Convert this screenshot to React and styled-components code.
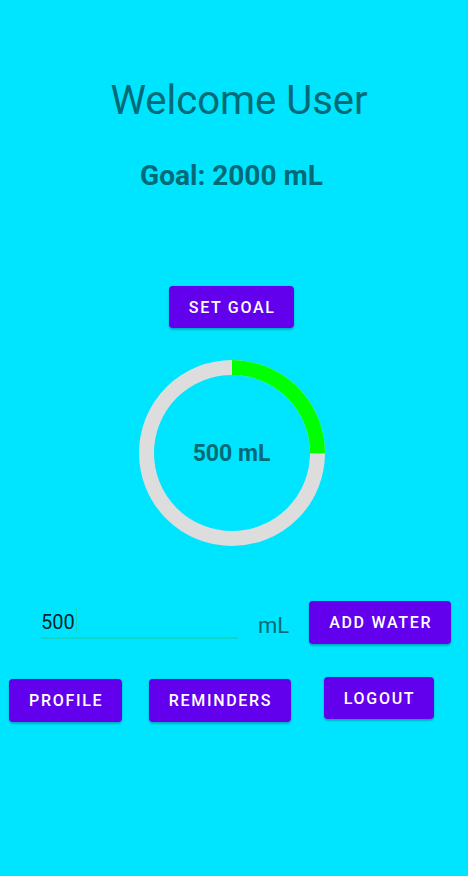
import React from "react";
import styled, { createGlobalStyle } from "styled-components";

const Global = createGlobalStyle`
  html, body {
    margin: 0;
    padding: 0;
    background: #00e5ff;
  }
  body {
    font-family: Roboto, "Noto Sans", Arial, sans-serif;
  }
`;

const Page = styled.div`
  width: 468px;
  min-height: 876px;
  background: #00e5ff;
  display: flex;
  flex-direction: column;
  box-sizing: border-box;
  padding-top: 78px;
`;

const Center = styled.div`
  display: flex;
  flex-direction: column;
  align-items: center;
  padding-right: ${(p) => p.$shiftLeft || 0}px;
  padding-left: ${(p) => p.$shiftRight || 0}px;
  margin-top: ${(p) => p.$top || 0}px;
`;

const Title = styled.h1`
  margin: 0;
  font-family: Roboto, sans-serif;
  font-weight: 400;
  font-size: 40px;
  line-height: 46px;
  color: #006a76;
`;

const Goal = styled.h2`
  margin: 0;
  font-family: Roboto, sans-serif;
  font-weight: 700;
  font-size: 28px;
  line-height: 32px;
  color: #006a76;
`;

const Button = styled.button`
  display: inline-flex;
  align-items: center;
  justify-content: center;
  box-sizing: border-box;
  height: ${(p) => p.$h || 43}px;
  padding: 0 18.5px 0 20px;
  margin-top: ${(p) => p.$mt || 0}px;
  margin-left: ${(p) => p.$ml || 0}px;
  border: none;
  border-radius: 4px;
  background: #6200ee;
  color: #ffffff;
  font-family: Roboto, sans-serif;
  font-weight: 500;
  font-size: 16px;
  letter-spacing: 1.7px;
  text-transform: uppercase;
  box-shadow: 0 2px 2px rgba(0, 0, 0, 0.22), 0 0 2px rgba(0, 0, 0, 0.12);
  cursor: pointer;
`;

const Ring = styled.div`
  display: grid;
  width: 186px;
  height: 186px;
  margin-top: 32px;
  & > * {
    grid-area: 1 / 1;
  }
`;

const RingLabel = styled.div`
  align-self: center;
  justify-self: center;
  font-family: Roboto, sans-serif;
  font-weight: 700;
  font-size: 23px;
  color: #006a76;
`;

const InputRow = styled.div`
  display: flex;
  align-items: flex-start;
  padding-left: 41px;
  margin-top: 54px;
`;

const Field = styled.div`
  box-sizing: border-box;
  width: 197px;
  height: 39px;
  padding-top: 10px;
  border-bottom: 2px solid #0fd6c6;
  display: flex;
  align-items: flex-start;
  font-family: Roboto, sans-serif;
  font-size: 20px;
  line-height: 24px;
  color: rgba(0, 0, 0, 0.87);
`;

const Caret = styled.span`
  display: inline-block;
  width: 1.5px;
  height: 26px;
  margin-top: -3px;
  margin-left: 1px;
  background: #0fd6c6;
`;

const Unit = styled.span`
  margin-left: 20px;
  margin-top: 13px;
  font-family: Roboto, sans-serif;
  font-size: 22px;
  line-height: 26px;
  color: #006a76;
`;

const BottomRow = styled.div`
  display: flex;
  align-items: flex-start;
  padding-left: 9px;
  margin-top: 33px;
`;

function Progress({ value, max }) {
  const r = 85.5;
  const c = 2 * Math.PI * r;
  const frac = value / max;
  return (
    <Ring>
      <svg width="186" height="186" viewBox="0 0 186 186">
        <circle cx="93" cy="93" r={r} fill="none" stroke="#dddddd" strokeWidth="15" />
        <circle
          cx="93"
          cy="93"
          r={r}
          fill="none"
          stroke="#00ff00"
          strokeWidth="15"
          strokeDasharray={`${c * frac} ${c}`}
          transform="rotate(-90 93 93)"
        />
      </svg>
      <RingLabel>{value} mL</RingLabel>
    </Ring>
  );
}

export default function App() {
  return (
    <>
      <Global />
      <Page>
        <Center $shiftRight={10}>
          <Title>Welcome User</Title>
        </Center>
        <Center $shiftLeft={5} $top={36}>
          <Goal>Goal: 2000 mL</Goal>
          <Button $h={42} $mt={94}>Set Goal</Button>
          <Progress value={500} max={2000} />
        </Center>
        <InputRow>
          <Field>
            500
            <Caret />
          </Field>
          <Unit>mL</Unit>
          <Button $ml={20} $mt={1}>Add Water</Button>
        </InputRow>
        <BottomRow>
          <Button $mt={2}>Profile</Button>
          <Button $mt={2} $ml={27}>Reminders</Button>
          <Button $ml={33} $h={42}>Logout</Button>
        </BottomRow>
      </Page>
    </>
  );
}
